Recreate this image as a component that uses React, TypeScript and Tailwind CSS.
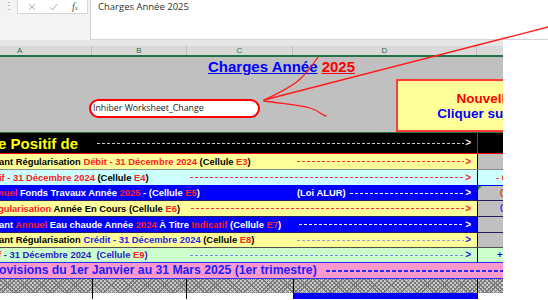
import React from "react";

function Arrow({ className }: { className: string }) {
  return (
    <span className={"mr-[6px] ml-[1px] text-[10px] font-bold leading-none " + className}>&gt;</span>
  );
}

export default function App() {
  return (
    <div className="relative h-[300px] w-[548px] overflow-hidden bg-white font-['Liberation_Sans',Arial,sans-serif]">
      {/* Toolbar / formula bar */}
      <div className="flex h-[40px] w-[548px] bg-[#f3f3f3]">
        <div className="w-[90px] shrink-0">
          <div className="flex h-[14px]">
            <div className="flex w-[17px] justify-center pt-[1px] text-[10px] leading-[10px] text-[#8a8a8a]">⋮</div>
            <div className="flex h-[14px] w-[71px] items-center border border-t-0 border-[#d6d6d6] bg-white">
              <svg width="8" height="8" viewBox="0 0 8 8" className="ml-[10px]">
                <path d="M1 1L7 7M7 1L1 7" stroke="#b0b0b0" strokeWidth="1" fill="none" />
              </svg>
              <svg width="9" height="8" viewBox="0 0 9 8" className="ml-[13px]">
                <path d="M1 4.5L3.5 7L8 1" stroke="#b0b0b0" strokeWidth="1" fill="none" />
              </svg>
              <span className="ml-[14px] font-['Liberation_Serif',serif] text-[10px] italic leading-none text-[#555]">
                f<span className="text-[7px]">x</span>
              </span>
            </div>
          </div>
        </div>
        <div className="flex-1 border-b border-l border-[#d4d4d4] bg-white pl-[7px] pt-[1px] font-['Open_Sans',sans-serif] text-[9.5px] leading-[12px] text-[#333]">
          Charges Année 2025
        </div>
      </div>

      {/* Sheet */}
      <div className="w-[503px] overflow-hidden">
        <div className="h-[6px] bg-[#e6e6e6]" />
        {/* column headers */}
        <div className="flex h-[11px] border-b-2 border-[#217346] bg-[#d9d9d9] text-[8px] leading-[9px] text-[#217346]">
          <div className="w-[92px] border-r border-[#bdbdbd] pl-[17px]">A</div>
          <div className="w-[95px] border-r border-[#bdbdbd] text-center">B</div>
          <div className="w-[106px] border-r border-[#bdbdbd] text-center">C</div>
          <div className="w-[184px] border-r border-[#bdbdbd] text-center">D</div>
          <div className="flex-1" />
        </div>

        {/* title area */}
        <div className="relative h-[76px] border-b border-[#2f6f3f] bg-[#c0c0c0]">
          <div className="ml-[208px] pt-[1px] text-[15px] font-bold leading-[17px]">
            <span className="text-[#0000ff] underline">Charges Année</span>{" "}
            <span className="text-[#ff0000] underline">2025</span>
          </div>
          <div className="absolute left-[89px] top-[42px] flex h-[19px] w-[171px] items-center rounded-full border-2 border-[#ff0000] bg-white pl-[2px] font-['Open_Sans',sans-serif] text-[8.8px] text-[#222]">
            Inhiber Worksheet_Change
          </div>
          <div className="absolute left-[396px] top-[22px] flex h-[53px] w-[222px] flex-col items-center justify-center border-2 border-[#ff3b3b] bg-[#ffff99] text-[13.5px] font-bold leading-[15px]">
            <span className="text-[#ff0000]">Nouvelle Année</span>
            <span className="text-[#0000ff]">Cliquer sur ce bouton</span>
          </div>
        </div>

        {/* black row */}
        <div className="flex h-[21px] border-b border-[#ff0000] bg-black">
          <div className="flex w-[477px] items-center overflow-hidden">
            <div className="w-[97px] shrink-0 whitespace-nowrap pl-[0px] text-[15px] font-bold leading-none text-[#ffff00]">
              <span className="-ml-[2px] inline-block">e Positif de</span>
            </div>
            <div className="h-px flex-1 bg-[repeating-linear-gradient(90deg,#c8c8c8_0_3px,transparent_3px_5px)]" />
            <Arrow className="text-[#e8e8e8]" />
          </div>
          <div className="w-[26px] border-l border-[#ff0000]" />
        </div>

        <div className="text-[9.4px] font-bold leading-none">
          {/* E3 */}
          <div className="flex h-[16px] border-b border-[#8a8a8a] bg-[#ffff99]">
            <div className="flex w-[477px] items-center overflow-hidden">
              <div className="w-[297px] shrink-0 whitespace-nowrap text-black">
                <span className="-ml-[1px]">ant Régularisation </span>
                <span className="text-[#ff2020]">Débit - 31 Décembre 2024</span> (Cellule <span className="text-[#ff2020]">E3</span>)
              </div>
              <div className="h-px flex-1 bg-[repeating-linear-gradient(90deg,#ff3030_0_3px,transparent_3px_5px)]" />
              <Arrow className="text-[#ff2020]" />
            </div>
            <div className="w-[26px] border-l border-black bg-[#c0c0c0]" />
          </div>

          {/* E4 */}
          <div className="flex h-[16px] border-b border-[#0000ff] bg-[#ccffff]">
            <div className="flex w-[477px] items-center overflow-hidden">
              <div className="w-[190px] shrink-0 whitespace-nowrap text-black">
                <span className="-ml-[1px] text-[#ff2020]">if - 31 Décembre 2024</span> (Cellule <span className="text-[#ff2020]">E4</span>)
              </div>
              <div className="h-px flex-1 bg-[repeating-linear-gradient(90deg,#ff3030_0_3px,transparent_3px_5px)]" />
              <Arrow className="text-[#ff2020]" />
            </div>
            <div className="flex w-[26px] items-center whitespace-nowrap border-l border-black bg-[#ccffff] pl-[18px] text-[#ff2020]">- 0</div>
          </div>

          {/* E5 */}
          <div className="flex h-[15px] border-b border-[#202060] bg-[#0000ff]">
            <div className="flex w-[477px] items-center overflow-hidden">
              <div className="w-[297px] shrink-0 whitespace-nowrap text-white">
                <span className="-ml-[2px] text-[#ff2020]">nuel</span> Fonds Travaux Année{" "}
                <span className="text-[#ff2020]">2025</span> - (Cellule <span className="text-[#ff2020]">E5</span>)
              </div>
              <span className="whitespace-nowrap text-white">(Loi ALUR)</span>
              <div className="ml-[4px] h-px flex-1 bg-[repeating-linear-gradient(90deg,#ffffff_0_3px,transparent_3px_5px)]" />
              <Arrow className="text-white" />
            </div>
            <div className="relative flex w-[26px] items-center whitespace-nowrap border-l border-black bg-[#c0c0c0] pl-[22px] text-[11px] font-normal text-[#ff0000]">
              <span className="absolute left-0 top-0 h-0 w-0 border-r-[4px] border-t-[4px] border-r-transparent border-t-[#1f8f2f]" />
              0
            </div>
          </div>

          {/* E6 */}
          <div className="flex h-[16px] border-b border-[#202060] bg-[#ffff99]">
            <div className="flex w-[477px] items-center overflow-hidden">
              <div className="w-[191px] shrink-0 whitespace-nowrap text-black">
                <span className="-ml-[2px] text-[#ff2020]">gularisation</span> Année En Cours (Cellule{" "}
                <span className="text-[#ff2020]">E6</span>)
              </div>
              <div className="h-px flex-1 bg-[repeating-linear-gradient(90deg,#ff3030_0_3px,transparent_3px_5px)]" />
              <Arrow className="text-[#ff2020]" />
            </div>
            <div className="flex w-[26px] items-center whitespace-nowrap border-l border-black bg-[#c0c0c0] pl-[22px] text-[11px] font-normal text-[#0000ff]">0</div>
          </div>

          {/* E7 */}
          <div className="flex h-[16px] border-b border-[#202060] bg-[#0000ff]">
            <div className="flex w-[477px] items-center overflow-hidden">
              <div className="w-[299px] shrink-0 whitespace-nowrap text-white">
                <span className="-ml-[1px]">ant </span>
                <span className="text-[#ff2020]">Annuel</span> Eau chaude Année <span className="text-[#ff2020]">2024</span> À Titre{" "}
                <span className="text-[#ff2020]">Indicatif</span> (Cellule <span className="text-[#ff2020]">E7</span>)
              </div>
              <div className="h-px flex-1 bg-[repeating-linear-gradient(90deg,#ffffff_0_3px,transparent_3px_5px)]" />
              <Arrow className="text-white" />
            </div>
            <div className="w-[26px] border-l border-black bg-[#c0c0c0]" />
          </div>

          {/* E8 */}
          <div className="flex h-[15px] border-b border-[#505050] bg-[#ffff99]">
            <div className="flex w-[477px] items-center overflow-hidden">
              <div className="w-[297px] shrink-0 whitespace-nowrap text-black">
                <span className="-ml-[1px]">ant Régularisation </span>
                <span className="text-[#2424e8]">Crédit - 31 Décembre 2024</span> (Cellule <span className="text-[#ff2020]">E8</span>)
              </div>
              <div className="h-px flex-1 bg-[repeating-linear-gradient(90deg,#9a9ac8_0_3px,transparent_3px_5px)]" />
              <Arrow className="text-[#2020e0]" />
            </div>
            <div className="w-[26px] border-l border-black bg-[#c0c0c0]" />
          </div>

          {/* E9 */}
          <div className="flex h-[15px] border-b border-[#3030ff] bg-[#ccffcc]">
            <div className="flex w-[477px] items-center overflow-hidden">
              <div className="w-[190px] shrink-0 whitespace-nowrap text-[#2424c8]">
                <span className="-ml-[2px] text-[#ff2020]">f</span> - 31 Décembre 2024&nbsp; (Cellule{" "}
                <span className="text-[#ff2020]">E9</span>)
              </div>
              <div className="h-px flex-1 bg-[repeating-linear-gradient(90deg,#7090e8_0_3px,transparent_3px_5px)]" />
              <Arrow className="text-[#2020e0]" />
            </div>
            <div className="flex w-[26px] items-center whitespace-nowrap border-l border-black bg-[#ccffcc] pl-[19px] text-[#0000ff]">+</div>
          </div>

          {/* pink */}
          <div className="flex h-[16px] items-center border-b border-[#3030ff] bg-[#ff99cc] text-[12.2px] text-[#2020ff]">
            <div className="w-[326px] shrink-0 whitespace-nowrap">
              <span className="-ml-[1px]">ovisions du 1er Janvier au 31 Mars 2025 (1er trimestre)</span>
            </div>
            <div className="h-[2px] flex-1 bg-[repeating-linear-gradient(90deg,#2a2aff_0_4px,transparent_4px_6px)]" />
          </div>
        </div>

        {/* hatch row */}
        <div className="flex h-[14px] bg-[repeating-linear-gradient(45deg,#7a7a7a_0_1px,transparent_1px_3px),repeating-linear-gradient(-45deg,#7a7a7a_0_1px,#c8c8c8_1px_3px)]">
          <div className="w-[93px] border-r border-black" />
          <div className="w-[94px] border-r border-black" />
          <div className="w-[107px] border-r border-black" />
          <div className="w-[184px] border-r border-black" />
          <div className="flex-1" />
        </div>
        {/* bottom */}
        <div className="flex h-[6px] bg-white">
          <div className="w-[93px] border-r border-black" />
          <div className="w-[94px] border-r border-black" />
          <div className="w-[106px]" />
          <div className="w-[185px] border-x border-black bg-[#0000ff]" />
          <div className="flex-1" />
        </div>
      </div>

      {/* freehand red annotation */}
      <svg className="pointer-events-none absolute left-0 top-0" width="548" height="300" viewBox="0 0 548 300">
        <g stroke="#ff1a1a" strokeWidth="1.3" fill="none" strokeLinecap="round">
          <path d="M552 26 L264 100" />
          <path d="M264 100 Q290 88 299 80 T318 57" />
          <path d="M264 101 C285 104 300 105 310 108 S321 115 326 116" />
        </g>
      </svg>
    </div>
  );
}
